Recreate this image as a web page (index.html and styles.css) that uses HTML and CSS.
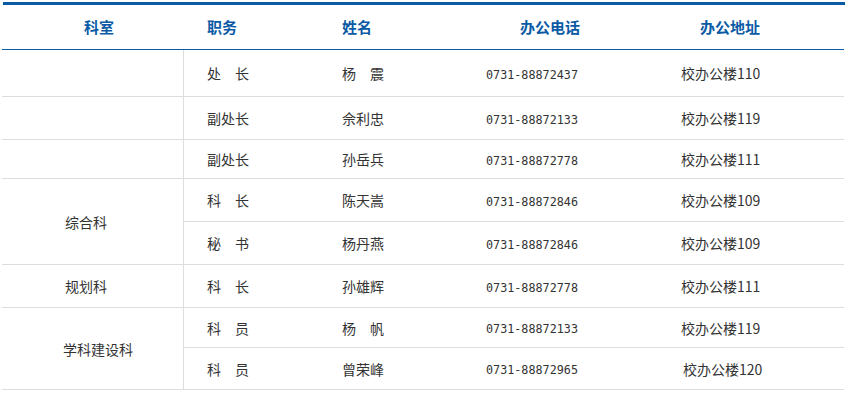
FILE: index.html
```html
<!DOCTYPE html>
<html lang="zh-CN">
<head>
<meta charset="utf-8">
<title>科室联系方式</title>
<link rel="stylesheet" href="styles.css">
</head>
<body>
<div class="wrap">
  <div class="topbar"></div>
  <table class="staff">
    <colgroup>
      <col class="c1"><col class="c2"><col class="c3"><col class="c4"><col class="c5">
    </colgroup>
    <thead>
      <tr>
        <th class="h1">科室</th>
        <th class="h2">职务</th>
        <th class="h3">姓名</th>
        <th class="h4">办公电话</th>
        <th class="h5">办公地址</th>
      </tr>
    </thead>
    <tbody>
      <tr class="tall">
        <td class="dept"></td>
        <td class="pos">处　长</td>
        <td class="name">杨　震</td>
        <td class="tel">0731-88872437</td>
        <td class="addr">校办公楼110</td>
      </tr>
      <tr class="roomy">
        <td class="dept"></td>
        <td class="pos">副处长</td>
        <td class="name">佘利忠</td>
        <td class="tel">0731-88872133</td>
        <td class="addr">校办公楼119</td>
      </tr>
      <tr class="tight">
        <td class="dept"></td>
        <td class="pos">副处长</td>
        <td class="name">孙岳兵</td>
        <td class="tel">0731-88872778</td>
        <td class="addr">校办公楼111</td>
      </tr>
      <tr class="roomy">
        <td class="dept" rowspan="2">综合科</td>
        <td class="pos">科　长</td>
        <td class="name">陈天嵩</td>
        <td class="tel">0731-88872846</td>
        <td class="addr">校办公楼109</td>
      </tr>
      <tr class="roomy">
        <td class="pos">秘　书</td>
        <td class="name">杨丹燕</td>
        <td class="tel">0731-88872846</td>
        <td class="addr">校办公楼109</td>
      </tr>
      <tr class="roomy">
        <td class="dept">规划科</td>
        <td class="pos">科　长</td>
        <td class="name">孙雄辉</td>
        <td class="tel">0731-88872778</td>
        <td class="addr">校办公楼111</td>
      </tr>
      <tr class="short">
        <td class="dept wide" rowspan="2">学科建设科</td>
        <td class="pos">科　员</td>
        <td class="name">杨　帆</td>
        <td class="tel">0731-88872133</td>
        <td class="addr">校办公楼119</td>
      </tr>
      <tr>
        <td class="pos">科　员</td>
        <td class="name">曾荣峰</td>
        <td class="tel">0731-88872965</td>
        <td class="addr shift">校办公楼120</td>
      </tr>
    </tbody>
  </table>
</div>
</body>
</html>
```

FILE: styles.css
```css
html, body {
  margin: 0;
  padding: 0;
  background: #ffffff;
}

body {
  font-family: "Noto Sans CJK SC", "Noto Sans", sans-serif;
  font-size: 14px;
  color: #333333;
}

.wrap {
  padding: 2px 0 0 2px;
  width: 843px;
}

.topbar {
  height: 3px;
  margin-left: 1px;
  width: 842px;
  background: #0a5aa5;
}

.staff {
  width: 842px;
  table-layout: fixed;
  border-collapse: separate;
  border-spacing: 0;
}

.c1 { width: 182px; }
.c2 { width: 136px; }
.c3 { width: 140px; }
.c4 { width: 190px; }
.c5 { width: 194px; }

.staff th,
.staff td {
  padding: 0;
  text-align: left;
  vertical-align: middle;
  white-space: nowrap;
  line-height: 20px;
}

.staff thead tr {
  height: 45px;
}

.staff th {
  border-bottom: 1px solid #0a5aa5;
  color: #0a5aa5;
  font-weight: bold;
  font-size: 15px;
}

.h1 { text-indent: 82px; }
.h2 { text-indent: 23px; }
.h3 { text-indent: 22px; }
.h4 { text-indent: 60px; }
.h5 { text-indent: 50px; }

.staff tbody tr { height: 42px; }
.staff tbody tr.tall { height: 47px; }
.staff tbody tr.roomy { height: 43px; }
.staff tbody tr.tight { height: 39px; }
.staff tbody tr.short { height: 40px; }

.staff td {
  border-bottom: 1px solid #dddddd;
}

.dept {
  border-right: 1px solid #dddddd;
  text-indent: 63px;
}

.dept.wide { text-indent: 61px; }

.pos { text-indent: 23px; }
.name { text-indent: 22px; }

.tel {
  text-indent: 26px;
  padding-top: 2px;
  font-family: "DejaVu Sans Mono", "Liberation Mono", monospace;
  font-size: 11.75px;
  color: #333333;
}

.staff td.tel { padding-top: 3px; }

.addr { text-indent: 31px; }
.addr.shift { text-indent: 33px; }
```
